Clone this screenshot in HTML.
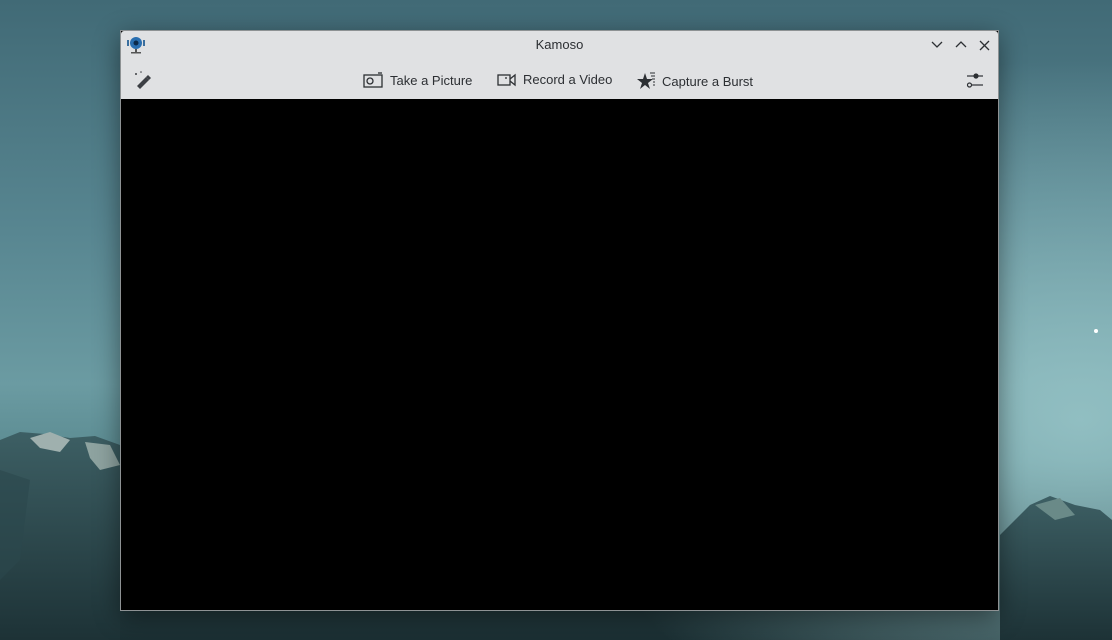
<!DOCTYPE html>
<html><head><meta charset="utf-8"><style>
html,body{margin:0;padding:0;width:1112px;height:640px;overflow:hidden}
body{position:relative;font-family:"Liberation Sans",sans-serif;
background:
 radial-gradient(ellipse 520px 360px at 1080px 420px, rgba(150,195,198,0.9), rgba(150,195,198,0) 100%),
 linear-gradient(180deg,#416a76 0%,#578590 35%,#6b9ba2 60%,#5a8a90 72%,#2a4448 88%,#1b2f33 100%);}
.m{position:absolute}
.win{position:absolute;left:120px;top:30px;width:877px;height:579px;background:#000;border:1px solid #8e9294;box-shadow:0 6px 24px rgba(0,0,0,0.45)}
.head{position:absolute;left:0;top:0;width:877px;height:68px;background:#e0e1e3;border-radius:3px 3px 0 0}
.title{position:absolute;left:0;width:877px;top:6px;text-align:center;font-size:13px;color:#2c2f33}
.btn{position:absolute;top:41px;font-size:13px;color:#2c2f33;display:flex;align-items:center}
.btn svg{margin-right:6px}
</style></head><body>
<svg class="m" style="left:0;top:0" width="1112" height="640">
 <defs><linearGradient id="g" x1="0" y1="0" x2="0" y2="1"><stop offset="0" stop-color="#3d5f64"/><stop offset="1" stop-color="#1d3236"/></linearGradient></defs>
 <polygon points="0,440 20,432 45,434 70,438 95,436 120,445 120,640 0,640" fill="url(#g)"/>
 <polygon points="30,438 50,432 70,440 60,452 40,448" fill="#9fb0ae"/>
 <polygon points="85,442 110,445 120,465 100,470 90,458" fill="#8ea3a0"/>
 <polygon points="0,470 30,480 20,560 0,580" fill="#2c474c" opacity="0.6"/>
 <polygon points="1000,535 1030,505 1050,496 1075,505 1100,510 1112,520 1112,640 1000,640" fill="url(#g)"/>
 <polygon points="1035,505 1060,498 1075,515 1055,520" fill="#6a8a88"/>
 <circle cx="1096" cy="331" r="2" fill="#fff"/>
</svg>
<div class="win">
 <div class="head">
  <svg class="m" style="left:4px;top:4px" width="22" height="20"><rect x="2" y="5" width="2" height="6" fill="#3a6e9e"/><rect x="18" y="5" width="2" height="6" fill="#3a6e9e"/><circle cx="11" cy="8" r="6" fill="#2a6fb0"/><circle cx="11" cy="8" r="2.5" fill="#0c2a4a"/><rect x="10" y="14" width="2" height="3" fill="#555"/><rect x="6" y="17" width="10" height="1.5" fill="#555"/></svg>
  <div class="title">Kamoso</div>
  <svg class="m" style="left:808px;top:7px" width="64" height="14" fill="none" stroke="#2c2f33" stroke-width="1.3"><path d="M3 4l5 5 5-5"/><path d="M27 9l5-5 5 5"/><path d="M51 3l9 9M60 3l-9 9"/></svg>
  <svg class="m" style="left:12px;top:39px" width="20" height="20"><path d="M4 16l9-9 3 3-9 9z" fill="#3c3f44"/><path d="M13 7l2-2 3 3-2 2z" fill="#3c3f44"/><circle cx="3" cy="4" r="1" fill="#3c3f44"/><circle cx="8" cy="2" r="0.8" fill="#3c3f44"/></svg>
  <div class="btn" style="left:242px"><svg width="21" height="16" fill="none" stroke="#2c2f33" stroke-width="1.3"><rect x="1" y="3" width="18" height="12"/><circle cx="7" cy="9" r="3"/><path d="M15 1h4"/></svg>Take a Picture</div>
  <div class="btn" style="left:376px"><svg width="20" height="14" fill="none" stroke="#2c2f33" stroke-width="1.3"><rect x="1" y="2" width="12" height="10"/><path d="M13 6l5-4v10l-5-4"/><path d="M9 4v2"/></svg>Record a Video</div>
  <div class="btn" style="left:516px"><svg width="19" height="18"><path d="M8 1l2 6h6l-5 4 2 6-5-4-5 4 2-6-5-4h6z" fill="#2c2f33"/><path d="M13 1h5M14 4h4M15 7h3M16 10h2M16 13h2" stroke="#2c2f33" stroke-width="1"/></svg>Capture a Burst</div>
  <svg class="m" style="left:844px;top:39px" width="20" height="20" fill="none" stroke="#2c2f33" stroke-width="1.2"><path d="M2 6h16"/><circle cx="11" cy="6" r="2" fill="#2c2f33"/><path d="M7 15h11"/><circle cx="4.5" cy="15" r="2"/></svg>
 </div>
</div>
</body></html>
